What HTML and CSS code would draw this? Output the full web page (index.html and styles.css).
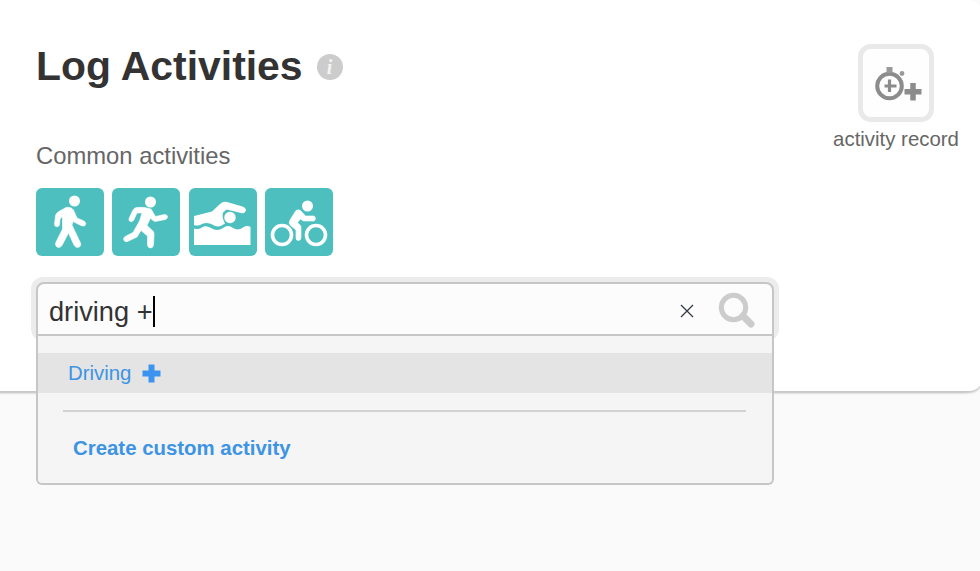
FILE: index.html
```html
<!DOCTYPE html>
<html lang="en">
<head>
  <meta charset="UTF-8">
  <title>Log Activities</title>
  <link rel="stylesheet" href="styles.css">
</head>
<body>
  <div class="panel">
    <div class="header">
      <div class="title">
        <h1>Log Activities</h1>
        <span class="info">i</span>
      </div>
      <div class="record">
        <button class="record-btn" aria-label="activity record">
          <svg width="48" height="36" viewBox="0 0 48 36">
            <g fill="none" stroke="#8c8c8c">
              <circle cx="15.500" cy="20" r="12.300" stroke-width="4"/>
              <path d="M15.500 13.500v12.500M10.500 20h12" stroke-width="3.200"/>
              <path d="M39 17v17.500M30.500 25.700h17" stroke-width="5.500"/>
            </g>
            <path d="M12.500 1h6v6h-6z" fill="#999"/>
            <circle cx="28" cy="7.500" r="2.400" fill="#999"/>
          </svg>
        </button>
        <span class="record-label">activity record</span>
      </div>
    </div>

    <h2>Common activities</h2>
    <div class="activities">
      <button class="activity" aria-label="walk">
        <svg width="68" height="68" viewBox="0 0 68 68">
          <circle cx="38.500" cy="13" r="5.500"/>
          <path class="body" d="M30 19.500Q35 18.500 37.500 22L41 30L48 33Q51 35 49 37.500Q48 38.500 45 37.500L37 33.500L36 37L44.500 55Q45.500 59 41.500 59.500Q39.500 59.500 38 57L32.500 45L26 57.500Q24 60.500 21 59Q18.500 57 20 54L26.500 41L26.500 28.500L24 31L23.500 37Q22.500 39.500 20 38.500Q18.500 38 18.500 36L19.500 27.500Q20 25.500 22 24Z"/>
        </svg>
      </button>
      <button class="activity" aria-label="run">
        <svg width="68" height="68" viewBox="0 0 68 68">
          <circle cx="38.500" cy="14" r="5.500"/>
          <path class="body" d="M24.500 19.500Q32 18.500 39 21L43.500 28.500L52.500 26.500Q55.500 26.500 55.500 29Q55.500 30.500 53.500 31.500L43 33.500Q40.500 33 38.500 30L35 37.500L41.500 43.500Q42 44.500 42 47L41.500 57Q41 60 38.500 60Q36 60 35.500 57L35.500 48L29 42.500L25 49L15.500 53.500Q12.500 54.500 11.500 51.500Q11.500 49 14 48L21 44.500L27.500 33L30 25L25 25L21.500 32.500Q19.500 34.500 17.500 33Q16.500 32 17 30.500L21 22Q22 20 24.500 19.500Z"/>
        </svg>
      </button>
      <button class="activity" aria-label="swim">
        <svg width="68" height="68" viewBox="0 0 68 68">
          <circle cx="41" cy="29.500" r="5.700"/>
          <path d="M5 28L23 23.500L31 16Q34 13 38 14L53.500 18.500Q57 20 57 22.500Q55.500 26 52 25L37.500 21.500L34 24.500Q32.500 29 36 35.500Q31 39.500 26 38Q19 33 13 36Q9 38.500 5 37Z"/>
          <path d="M5 40.500Q9 42 13 39.500Q17 37 22 40Q28 44 34 40Q39 36 44 40Q49 43 54 39.500Q58 37 61.500 39V57H5Z"/>
        </svg>
      </button>
      <button class="activity" aria-label="bike">
        <svg width="68" height="68" viewBox="0 0 68 68">
          <circle cx="42.500" cy="18" r="5.500"/>
          <g class="wheels">
            <circle cx="17" cy="47" r="9.500"/>
            <circle cx="51" cy="47" r="9.500"/>
          </g>
          <path class="body" d="M31 22.500Q34 21 36 23L40.500 28H48.500Q50.500 28.500 50.500 30.500Q50.500 32.500 48.500 33H38.500L35.500 31L32.500 34.500L35.500 37.500Q36 38.500 36 40V50Q35.500 52.500 33.500 52.500Q31 52.500 31 50V42L25 37Q23.500 35 25 32Z"/>
        </svg>
      </button>
    </div>

    <div class="search">
      <div class="search-box">
        <span class="query">driving +</span><span class="caret"></span>
        <svg class="clear" width="14" height="14" viewBox="0 0 14 14">
          <path d="M1 1l12 12M13 1L1 13"/>
        </svg>
        <svg class="magnifier" width="38" height="38" viewBox="0 0 38 38">
          <circle cx="15.500" cy="15.500" r="12.200" stroke-width="5"/>
          <path d="M25 24l8 8" stroke-width="7" stroke-linecap="round"/>
        </svg>
      </div>
      <div class="dropdown">
        <a class="result" href="#">Driving
          <svg width="19" height="19" viewBox="0 0 19 19">
            <path d="M9.500 .5v18M.5 9.500h18"/>
          </svg>
        </a>
        <div class="custom">
          <a href="#">Create custom activity</a>
        </div>
      </div>
    </div>
  </div>
</body>
</html>
```
FILE: styles.css
```css
* {
  box-sizing: border-box;
  margin: 0;
  padding: 0;
}

body {
  height: 571px;
  overflow: hidden;
  background: #fafafa;
  color: #666;
  font-family: "Liberation Sans", Arial, sans-serif;
}

a {
  color: #3d94e3;
  text-decoration: none;
}

button {
  border: none;
}

.panel {
  width: 983px;
  height: 391px;
  padding-left: 31px;
  background: #fff;
  border-radius: 0 14px 14px 0;
  box-shadow: 0 2px 2px #c9c9c9, -6px 2px 2px #c9c9c9;
}

.header {
  display: flex;
  justify-content: space-between;
  height: 141px;
  padding: 43px 22px 0 5px;
}

.title {
  display: flex;
  align-items: center;
  gap: 14px;
  height: 46px;
}

h1 {
  color: #333;
  font-size: 40.900px;
  line-height: 46px;
}

.info {
  width: 26px;
  height: 26px;
  margin-top: 2px;
  border-radius: 50%;
  background: #ccc;
  color: #f4f4f4;
  font: italic bold 20px/26px "Liberation Serif", serif;
  text-align: center;
}

.record {
  display: flex;
  flex-direction: column;
  align-items: center;
  width: 130px;
}

.record-btn {
  flex-shrink: 0;
  width: 76px;
  height: 78px;
  margin-top: 1px;
  padding: 4px 0 0 3px;
  border: 5px solid #e9e9e9;
  border-radius: 13px;
  background: #fefefe;
}

.record-label {
  margin-top: 5px;
  font-size: 20.400px;
  line-height: 24px;
  white-space: nowrap;
}

h2 {
  padding-left: 5px;
  font-size: 23.800px;
  font-weight: normal;
  line-height: 30px;
}

.activities {
  display: flex;
  gap: 8.400px;
  padding: 17px 5px 21px;
}

.activity {
  width: 68px;
  height: 68px;
  border-radius: 6px;
  background: #4dbfbf;
}

.activity svg {
  display: block;
  fill: #fff;
}

.activity .body {
  stroke: #fff;
  stroke-width: .6;
}

.activity .wheels {
  fill: none;
  stroke: #fff;
  stroke-width: 3.600;
}

.search {
  position: relative;
  width: 748px;
  height: 64px;
  padding: 5px 5px 0;
  border-radius: 12px;
  background: #ececec;
}

.search-box {
  display: flex;
  align-items: center;
  height: 54px;
  padding: 3px 16px 0 11px;
  border: 2px solid #c6c6c6;
  border-radius: 8px 8px 0 0;
  background: #fcfcfc;
}

.query {
  padding-top: 3px;
  color: #333;
  font-size: 27.200px;
}

.caret {
  width: 2px;
  height: 31px;
  margin-top: 1px;
  background: #000;
}

.clear {
  margin-left: auto;
  fill: none;
  stroke: #333a45;
  stroke-width: 1.300;
}

.magnifier {
  margin-left: 24px;
  fill: none;
  stroke: #ccc;
}

.dropdown {
  position: absolute;
  top: 59px;
  left: 5px;
  width: 738px;
  height: 149px;
  padding-top: 17px;
  border: 2px solid #c6c6c6;
  border-top: none;
  border-radius: 0 0 6px 6px;
  background: #f5f5f5;
}

.result {
  display: flex;
  align-items: center;
  gap: 11px;
  height: 40px;
  padding-left: 30px;
  background: #e4e4e4;
  font-size: 20.400px;
}

.result svg {
  stroke: #3d94f0;
  stroke-width: 6;
}

.custom {
  margin: 17px 26px 0 25px;
  padding: 24px 10px 0;
  border-top: 2px solid #d2d2d2;
  font-size: 20.400px;
  font-weight: bold;
  line-height: 24px;
}
```
